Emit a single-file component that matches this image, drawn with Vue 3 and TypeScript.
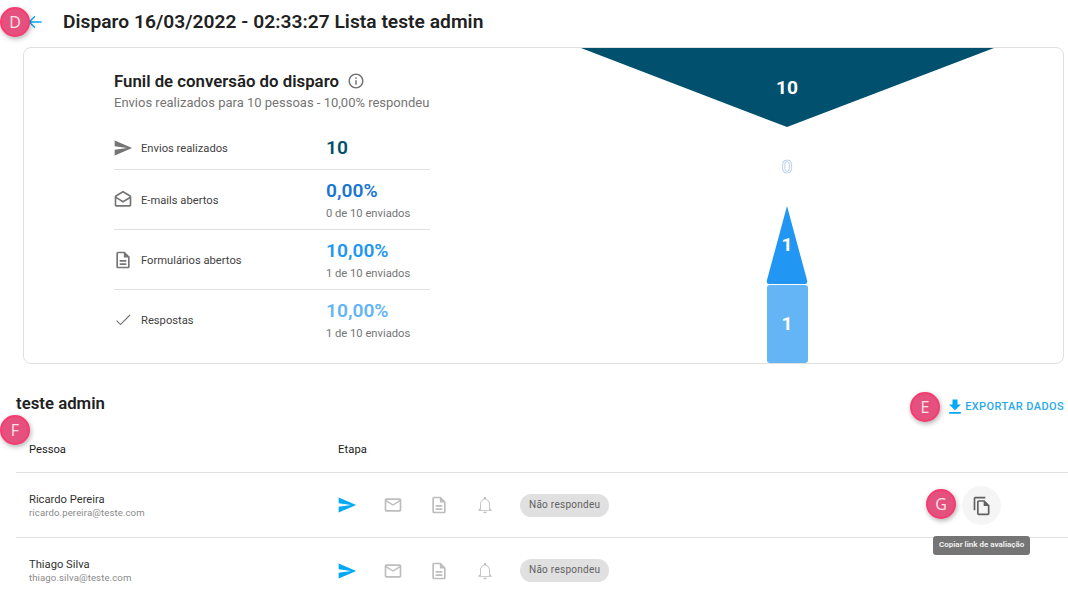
<script setup lang="ts">
interface Stat { label: string; value: string; sub?: string; tone: string; icon: string; }
const stats: Stat[] = [
  { label: 'Envios realizados', value: '10', tone: 'navy', icon: 'M2.01 21L23 12 2.01 3 2 10l15 2-15 2z' },
  { label: 'E-mails abertos', value: '0,00%', sub: '0 de 10 enviados', tone: 'blue', icon: 'M21.99 8c0-.72-.37-1.35-.94-1.7L12 1 2.95 6.3C2.38 6.65 2 7.28 2 8v10c0 1.1.9 2 2 2h16c1.1 0 2-.9 2-2l-.01-10zM12 3.32 19.99 8v.01L12 13 4 8l8-4.68zM4 18v-7.66l8 5.02 7.99-4.99L20 18H4z' },
  { label: 'Formulários abertos', value: '10,00%', sub: '1 de 10 enviados', tone: 'mid', icon: 'M8 16h8v2H8zm0-4h8v2H8zm6-10H6c-1.1 0-2 .9-2 2v16c0 1.1.89 2 1.99 2H18c1.1 0 2-.9 2-2V8l-6-6zm4 18H6V4h7v5h5v11z' },
  { label: 'Respostas', value: '10,00%', sub: '1 de 10 enviados', tone: 'light', icon: 'M9 16.4L4.8 12.2l-1 1L9 18.4 20.9 6.5l-1-1z' },
];
const people = [
  { name: 'Ricardo Pereira', email: 'ricardo.pereira@teste.com', action: true },
  { name: 'Thiago Silva', email: 'thiago.silva@teste.com', action: false },
];
const steps = [
  { cls: 'on', d: 'M2.01 21L23 12 2.01 3 2 10l15 2-15 2z' },
  { cls: '', d: 'M20 4H4c-1.1 0-1.99.9-1.99 2L2 18c0 1.1.9 2 2 2h16c1.1 0 2-.9 2-2V6c0-1.1-.9-2-2-2zm0 14H4V8l8 5 8-5v10zm-8-7L4 6h16l-8 5z' },
  { cls: '', d: 'M8 16h8v2H8zm0-4h8v2H8zm6-10H6c-1.1 0-2 .9-2 2v16c0 1.1.89 2 1.99 2H18c1.1 0 2-.9 2-2V8l-6-6zm4 18H6V4h7v5h5v11z' },
  { cls: '', d: 'M12 22c1.1 0 2-.9 2-2h-4c0 1.1.9 2 2 2zm6-6v-5c0-3.07-1.63-5.64-4.5-6.32V4c0-.83-.67-1.5-1.5-1.5s-1.5.67-1.5 1.5v.68C7.64 5.36 6 7.92 6 11v5l-2 2v1h16v-1l-2-2zm-1 2H7v-7c0-2.6 1.9-5.5 5-5.5s5 2.9 5 5.5v7z' },
];
</script>

<template>
  <div class="page">
    <header class="head">
      <svg class="back" viewBox="0 0 24 24"><path d="M20 12H5M12 5l-7 7 7 7" fill="none" stroke="currentColor" stroke-width="1.6" /></svg>
      <h1>Disparo 16/03/2022 - 02:33:27 Lista teste admin</h1>
    </header>

    <section class="card">
      <div class="summary">
        <h2>Funil de conversão do disparo
          <svg class="info" viewBox="0 0 24 24"><path d="M11 7h2v2h-2zm0 4h2v6h-2zm1-9C6.48 2 2 6.48 2 12s4.48 10 10 10 10-4.48 10-10S17.52 2 12 2zm0 18c-4.41 0-8-3.59-8-8s3.59-8 8-8 8 3.59 8 8-3.59 8-8 8z" /></svg>
        </h2>
        <p class="lead">Envios realizados para 10 pessoas - 10,00% respondeu</p>
        <div class="stats">
          <div v-for="s in stats" :key="s.label" class="stat">
            <svg class="stat-icon" viewBox="0 0 24 24"><path :d="s.icon" /></svg>
            <span class="stat-label">{{ s.label }}</span>
            <div class="stat-num">
              <strong :class="s.tone">{{ s.value }}</strong>
              <small v-if="s.sub">{{ s.sub }}</small>
            </div>
          </div>
        </div>
      </div>
      <svg class="funnel" viewBox="0 0 633 315">
        <polygon points="151,0 564,0 357,79" fill="#00506e" />
        <text x="357" y="46" class="fn">10</text>
        <text x="357" y="125" class="fn zero">0</text>
        <path d="M357 158 L377 232 Q378 236 375 236 L339 236 Q336 236 337 232 Z" fill="#2196f3" />
        <text x="357" y="203" class="fn">1</text>
        <rect x="337" y="237" width="41" height="78" rx="3" fill="#64b5f6" />
        <text x="357" y="282" class="fn">1</text>
      </svg>
    </section>

    <section class="list">
      <div class="list-top">
        <h3>teste admin</h3>
        <a class="export">
          <svg viewBox="0 0 24 24"><path d="M19 9h-4V3H9v6H5l7 7 7-7zM5 18v2h14v-2H5z" /></svg>
          EXPORTAR DADOS
        </a>
      </div>
      <div class="row row-head">
        <span class="col-person">Pessoa</span>
        <span class="col-step">Etapa</span>
      </div>
      <div v-for="p in people" :key="p.email" class="row">
        <div class="col-person">
          <div class="name">{{ p.name }}</div>
          <div class="email">{{ p.email }}</div>
        </div>
        <div class="steps">
          <svg v-for="(st, i) in steps" :key="i" :class="['step', st.cls]" viewBox="0 0 24 24"><path :d="st.d" /></svg>
          <span class="chip">Não respondeu</span>
        </div>
        <div v-if="p.action" class="action">
          <button class="copy" type="button">
            <svg viewBox="0 0 24 24"><path d="M16 1H4c-1.1 0-2 .9-2 2v14h2V3h12V1zm-1 4H8c-1.1 0-1.99.9-1.99 2L6 21c0 1.1.89 2 1.99 2H19c1.1 0 2-.9 2-2V11l-6-6zM8 21V7h6v5h5v9H8z" /></svg>
          </button>
          <span class="tip">Copiar link de avaliação</span>
        </div>
      </div>
    </section>

    <span class="mark m-d">D</span>
    <span class="mark m-e">E</span>
    <span class="mark m-f">F</span>
    <span class="mark m-g">G</span>
  </div>
</template>

<style>
html, body { margin: 0; overflow: hidden; background: #fff; }
</style>

<style scoped>
.page {
  position: relative;
  width: 1068px;
  height: 596px;
  overflow: hidden;
  font-family: Roboto, "Liberation Sans", sans-serif;
  color: #212121;
  background: #fff;
}
.head { display: flex; align-items: center; height: 47px; padding-left: 25px; box-sizing: border-box; padding-bottom: 4px; }
.back { width: 20px; height: 20px; color: #03a9f4; margin-right: 18px; margin-top: 1px; }
h1 { margin: 0; font-size: 19.2px; font-weight: 600; line-height: 24px; letter-spacing: .03px; }
.card {
  display: flex;
  box-sizing: border-box;
  width: 1041px;
  height: 317px;
  margin-left: 23px;
  border: 1px solid #e0e0e0;
  border-radius: 8px;
  overflow: hidden;
}
.summary { width: 316px; margin-left: 90px; flex: none; }
h2 { display: flex; align-items: center; margin: 22px 0 0; font-size: 16.8px; font-weight: 600; line-height: 22px; white-space: nowrap; }
.info { width: 18px; height: 18px; margin-left: 8px; fill: #757575; }
.lead { margin: 3px 0 0; font-size: 13px; line-height: 16px; color: #757575; white-space: nowrap; }
.stats { margin-top: 16px; }
.stat { display: flex; align-items: center; height: 60px; box-sizing: border-box; border-bottom: 1px solid #e0e0e0; }
.stat:first-child { height: 43px; }
.stat:last-child { border-bottom: 0; }
.stat:nth-child(2) .stat-label, .stat:nth-child(3) .stat-label { margin-top: 2px; }
.stat-icon { width: 20px; height: 20px; fill: #757575; flex: none; margin: 0 8px 0 -1px; }
.stat-label { width: 185px; font-size: 11.2px; color: #424242; }
.stat-num { display: flex; flex-direction: column; }
.stat-num strong { font-size: 19.2px; font-weight: 600; line-height: 24px; }
.stat-num small { font-size: 11.2px; line-height: 14px; margin-top: 4px; color: #757575; }
.navy { color: #00506e; }
.blue { color: #1976d2; }
.mid { color: #2196f3; }
.light { color: #64b5f6; }
.funnel { width: 633px; height: 315px; flex: none; }
.fn { font-size: 19.2px; font-weight: 700; fill: #fff; text-anchor: middle; font-family: Roboto, sans-serif; }
.zero { font-weight: 500; stroke: #a9c3e2; stroke-width: .7px; }
.list { margin-left: 16px; width: 1052px; }
.list-top { display: flex; justify-content: space-between; align-items: center; height: 39px; margin-top: 20px; }
h3 { margin: 0 0 2px; font-size: 16.8px; font-weight: 600; }
.export { display: flex; align-items: center; margin-right: 4px; margin-top: 6px; font-size: 11px; font-weight: 500; letter-spacing: .4px; color: #29a9eb; }
.export svg { width: 20px; height: 20px; fill: #03a9f4; }
.row { position: relative; display: flex; align-items: center; height: 65px; box-sizing: border-box; border-bottom: 1px solid #e0e0e0; font-size: 11.2px; }
.row-head { height: 50px; padding-top: 3px; color: #212121; }
.row:last-child { border-bottom: 0; }
.col-person { width: 309px; padding-left: 13px; flex: none; }
.col-step { letter-spacing: .1px; }
.name { font-size: 11.2px; line-height: 15px; color: #333; }
.email { font-size: 9.6px; line-height: 12px; color: #8a8a8a; letter-spacing: .1px; }
.steps { display: flex; align-items: center; margin-left: -1px; }
.step { width: 20px; height: 20px; fill: #bdbdbd; margin-right: 26px; flex: none; }
.step:nth-child(4) { margin-right: 25px; }
.step.on { fill: #03a9f4; }
.chip { height: 23px; line-height: 22px; padding: 0 9px; border-radius: 12px; background: #e0e0e0; font-size: 10px; letter-spacing: .27px; color: #616161; white-space: nowrap; }
.action { position: absolute; left: 946px; top: 13px; width: 39px; height: 39px; }
.copy { display: flex; align-items: center; justify-content: center; width: 39px; height: 39px; padding: 0; border: 0; border-radius: 50%; background: #f5f5f5; }
.copy svg { width: 20px; height: 20px; fill: #616161; }
.tip { position: absolute; left: -29px; top: 50px; padding: 0 6px; height: 19px; line-height: 18px; border-radius: 3px; background: #757575; color: #eee; font-size: 8px; font-weight: 700; white-space: nowrap; }
.mark {
  position: absolute;
  width: 30px;
  height: 30px;
  box-sizing: border-box;
  display: flex;
  align-items: center;
  justify-content: center;
  border: 2px solid #f73a70;
  border-radius: 50%;
  background: #e5517f;
  box-shadow: 1px 2px 5px rgba(0, 0, 0, .3);
  color: #fbe3ea;
  font-size: 16px;
  font-family: "Open Sans", sans-serif;
}
.m-d { left: 0; top: 7px; }
.m-e { left: 910px; top: 392px; }
.m-f { left: 0; top: 415px; }
.m-g { left: 926px; top: 489px; }
</style>
